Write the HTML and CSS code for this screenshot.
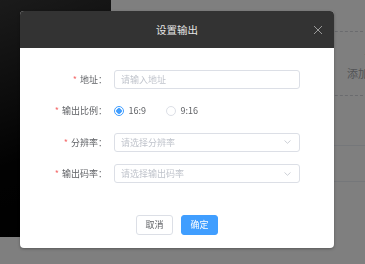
FILE: index.html
```html
<!DOCTYPE html>
<html lang="zh-CN">
<head>
    <meta charset="UTF-8">
    <meta name="viewport" content="width=device-width, initial-scale=1.0">
    <title>设置输出</title>
    <link rel="stylesheet" href="styles.css">
</head>
<body>
    <div class="page">
        <div class="preview"></div>
        <div class="side">
            <div class="add-box">
                <span class="add-plus">+</span>
                <span class="add-text">添加输出</span>
            </div>
            <div class="output-row"></div>
        </div>
    </div>

    <div class="mask"></div>

    <div class="dialog">
        <div class="dialog-header">
            <span class="dialog-title">设置输出</span>
            <span class="dialog-close">
                <svg width="10" height="10" viewBox="0 0 10 10"><path d="M1 1L9 9M9 1L1 9" stroke="#9a9a9a" stroke-width="1" fill="none"/></svg>
            </span>
        </div>
        <div class="dialog-body">
            <div class="form-item">
                <label class="form-label required">地址：</label>
                <div class="input">请输入地址</div>
            </div>
            <div class="form-item">
                <label class="form-label required">输出比例：</label>
                <div class="radio-group">
                    <span class="radio checked"><span class="radio-dot"></span>16:9</span>
                    <span class="radio"><span class="radio-dot"></span>9:16</span>
                </div>
            </div>
            <div class="form-item">
                <label class="form-label required">分辨率：</label>
                <div class="input select">
                    <span>请选择分辨率</span>
                    <svg width="7" height="4" viewBox="0 0 7 4"><path d="M0.5 0.5L3.5 3.3L6.5 0.5" stroke="#c0c4cc" stroke-width="0.8" fill="none"/></svg>
                </div>
            </div>
            <div class="form-item">
                <label class="form-label required">输出码率：</label>
                <div class="input select">
                    <span>请选择输出码率</span>
                    <svg width="7" height="4" viewBox="0 0 7 4"><path d="M0.5 0.5L3.5 3.3L6.5 0.5" stroke="#c0c4cc" stroke-width="0.8" fill="none"/></svg>
                </div>
            </div>
        </div>
        <div class="dialog-footer">
            <button type="button" class="btn">取消</button>
            <button type="button" class="btn btn-primary">确定</button>
        </div>
    </div>
</body>
</html>
```

FILE: styles.css
```css
* {
    margin: 0;
    padding: 0;
    box-sizing: border-box;
}

body {
    font-family: "Noto Sans CJK SC", "Noto Sans", sans-serif;
    background: #fff;
    width: 365px;
    height: 264px;
    overflow: hidden;
}

.page {
    display: flex;
    height: 264px;
}

.preview {
    width: 111px;
    height: 237px;
    flex-shrink: 0;
    background: linear-gradient(160deg, #363636, #050505 60%, #000);
}

.side {
    flex: 1;
    padding: 31px 0 0 88px;
    overflow: hidden;
}

.add-box {
    width: 340px;
    height: 65px;
    border-top: 1px dashed #d4d6dc;
    border-bottom: 1px dashed #d4d6dc;
    display: flex;
    flex-direction: column;
    align-items: center;
    justify-content: center;
    color: #a6a8ad;
}

.add-plus {
    font-size: 18px;
    line-height: 16px;
    font-weight: 300;
}

.add-text {
    font-size: 11px;
    line-height: 18px;
    margin-top: 3px;
}

.output-row {
    margin-top: 49px;
    height: 37px;
    border-top: 1px solid #ebeef5;
    border-bottom: 1px solid #ebeef5;
}

.mask {
    position: fixed;
    inset: 0;
    background: rgba(0, 0, 0, 0.5);
}

.dialog {
    position: absolute;
    left: 20px;
    top: 11px;
    width: 314px;
    height: 237px;
    background: #fff;
    border-radius: 4px;
    overflow: hidden;
    box-shadow: 0 1px 3px rgba(0, 0, 0, 0.3);
}

.dialog-header {
    position: relative;
    height: 37px;
    background: #333;
    display: flex;
    align-items: center;
    justify-content: center;
}

.dialog-title {
    color: #e6e6e6;
    font-size: 10.5px;
}

.dialog-close {
    position: absolute;
    right: 11px;
    top: 14px;
    display: flex;
}

.dialog-body {
    padding-top: 22px;
}

.form-item {
    display: flex;
    align-items: center;
    gap: 7px;
    height: 19px;
    margin-bottom: 12.4px;
}

.form-item:last-child {
    margin-bottom: 0;
}

.form-label {
    width: 87px;
    text-align: right;
    font-size: 9px;
    color: #606266;
    line-height: 19px;
}

.form-label.required::before {
    content: '*';
    color: #f56c6c;
    margin-right: 3px;
}

.input {
    width: 186px;
    height: 19px;
    border: 1px solid #dcdfe6;
    border-radius: 3px;
    padding: 0 8px 0 6px;
    font-size: 9px;
    color: #c0c4cc;
    display: flex;
    align-items: center;
}

.select {
    justify-content: space-between;
}

.radio-group {
    display: flex;
    align-items: center;
    gap: 20px;
}

.radio {
    display: flex;
    align-items: center;
    gap: 4.5px;
    font-size: 9px;
    color: #606266;
    line-height: 19px;
}

.radio-dot {
    width: 10px;
    height: 10px;
    border-radius: 50%;
    border: 1px solid #dcdfe6;
    background: #fff;
}

.radio.checked .radio-dot {
    border-color: #409eff;
    background: radial-gradient(circle, #409eff 0 2.5px, #fff 3px);
}

.dialog-footer {
    display: flex;
    justify-content: center;
    gap: 8px;
    margin-top: 31.8px;
}

.btn {
    width: 37px;
    height: 20px;
    border: 1px solid #dcdfe6;
    border-radius: 3px;
    background: #fff;
    color: #606266;
    font-family: inherit;
    font-size: 9px;
    cursor: pointer;
}

.btn-primary {
    background: #409eff;
    border-color: #409eff;
    color: #fff;
}
```
